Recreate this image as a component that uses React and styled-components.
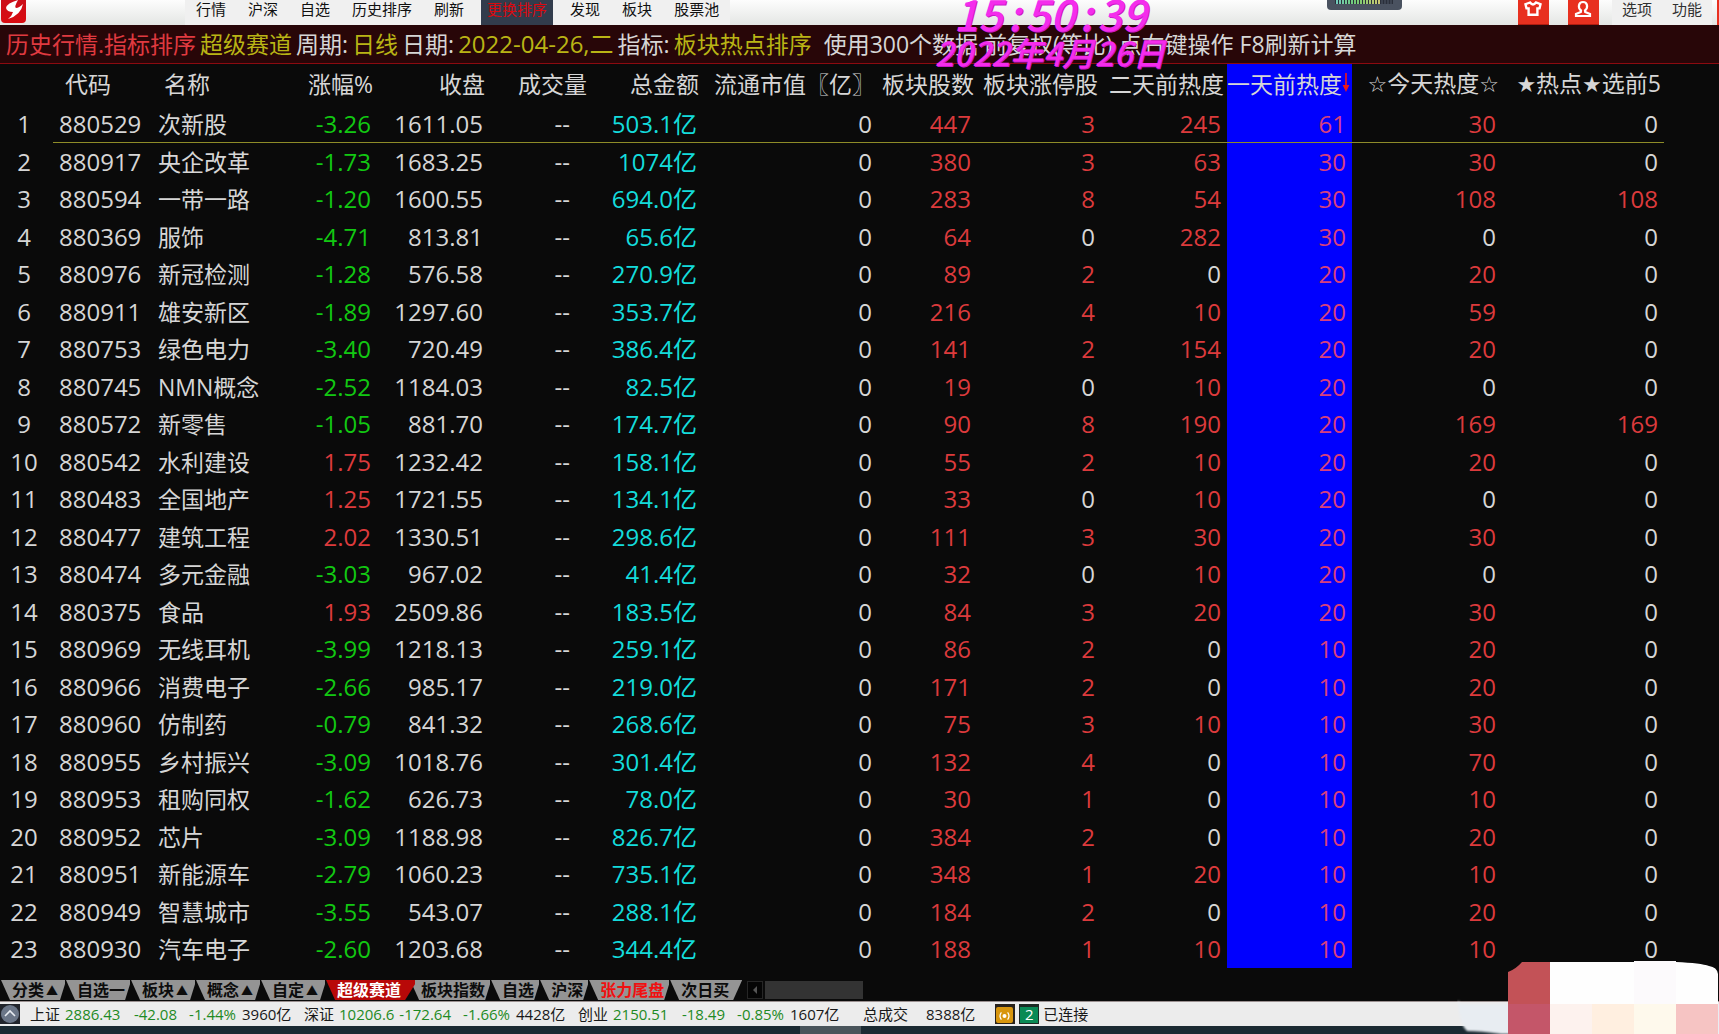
import React from 'react';

import styled, { createGlobalStyle } from 'styled-components';

const menuLeft = ['行情', '沪深', '自选', '历史排序', '刷新', '更换排序', '发现', '板块', '股票池'];

const columns = [
    { key: 'index', label: '', width: 53 },
    { key: 'code', label: '代码', width: 99 },
    { key: 'name', label: '名称', width: 100 },
    { key: 'change', label: '涨幅%', width: 124 },
    { key: 'close', label: '收盘', width: 112 },
    { key: 'volume', label: '成交量', width: 102 },
    { key: 'amount', label: '总金额', width: 112 },
    { key: 'cap', label: '流通市值〖亿〗', width: 176 },
    { key: 'stocks', label: '板块股数', width: 99 },
    { key: 'limitUp', label: '板块涨停股', width: 124 },
    { key: 'twoDays', label: '二天前热度', width: 126 },
    { key: 'oneDay', label: '一天前热度', width: 125 },
    { key: 'today', label: '☆今天热度☆', width: 150 },
    { key: 'hot', label: '★热点★选前5', width: 162 },
];

// code, name, change, close, amount, stocks, limitUp, twoDays, oneDay, today, hot
const boards = [
    ['880529', '次新股', '-3.26', '1611.05', '503.1亿', 447, 3, 245, 61, 30, 0],
    ['880917', '央企改革', '-1.73', '1683.25', '1074亿', 380, 3, 63, 30, 30, 0],
    ['880594', '一带一路', '-1.20', '1600.55', '694.0亿', 283, 8, 54, 30, 108, 108],
    ['880369', '服饰', '-4.71', '813.81', '65.6亿', 64, 0, 282, 30, 0, 0],
    ['880976', '新冠检测', '-1.28', '576.58', '270.9亿', 89, 2, 0, 20, 20, 0],
    ['880911', '雄安新区', '-1.89', '1297.60', '353.7亿', 216, 4, 10, 20, 59, 0],
    ['880753', '绿色电力', '-3.40', '720.49', '386.4亿', 141, 2, 154, 20, 20, 0],
    ['880745', 'NMN概念', '-2.52', '1184.03', '82.5亿', 19, 0, 10, 20, 0, 0],
    ['880572', '新零售', '-1.05', '881.70', '174.7亿', 90, 8, 190, 20, 169, 169],
    ['880542', '水利建设', '1.75', '1232.42', '158.1亿', 55, 2, 10, 20, 20, 0],
    ['880483', '全国地产', '1.25', '1721.55', '134.1亿', 33, 0, 10, 20, 0, 0],
    ['880477', '建筑工程', '2.02', '1330.51', '298.6亿', 111, 3, 30, 20, 30, 0],
    ['880474', '多元金融', '-3.03', '967.02', '41.4亿', 32, 0, 10, 20, 0, 0],
    ['880375', '食品', '1.93', '2509.86', '183.5亿', 84, 3, 20, 20, 30, 0],
    ['880969', '无线耳机', '-3.99', '1218.13', '259.1亿', 86, 2, 0, 10, 20, 0],
    ['880966', '消费电子', '-2.66', '985.17', '219.0亿', 171, 2, 0, 10, 20, 0],
    ['880960', '仿制药', '-0.79', '841.32', '268.6亿', 75, 3, 10, 10, 30, 0],
    ['880955', '乡村振兴', '-3.09', '1018.76', '301.4亿', 132, 4, 0, 10, 70, 0],
    ['880953', '租购同权', '-1.62', '626.73', '78.0亿', 30, 1, 0, 10, 10, 0],
    ['880952', '芯片', '-3.09', '1188.98', '826.7亿', 384, 2, 0, 10, 20, 0],
    ['880951', '新能源车', '-2.79', '1060.23', '735.1亿', 348, 1, 20, 10, 10, 0],
    ['880949', '智慧城市', '-3.55', '543.07', '288.1亿', 184, 2, 0, 10, 20, 0],
    ['880930', '汽车电子', '-2.60', '1203.68', '344.4亿', 188, 1, 10, 10, 10, 0],
];

const tabs = [
    { label: '分类', menu: true },
    { label: '自选一' },
    { label: '板块', menu: true },
    { label: '概念', menu: true },
    { label: '自定', menu: true },
    { label: '超级赛道', active: true },
    { label: '板块指数' },
    { label: '自选' },
    { label: '沪深' },
    { label: '张力尾盘', hot: true },
    { label: '次日买' },
];

const indices = [
    { name: '上证', price: '2886.43', diff: '-42.08', pct: '-1.44%', amount: '3960亿' },
    { name: '深证', price: '10206.6', diff: '-172.64', pct: '-1.66%', amount: '4428亿' },
    { name: '创业', price: '2150.51', diff: '-18.49', pct: '-0.85%', amount: '1607亿' },
];

const colors = {
    text: '#d6d6d6',
    red: '#dc3a3c',
    green: '#12c812',
    cyan: '#14dcdc',
    yellow: '#b9b415',
};

export default function App() {

    return (
        <Page>
            <GlobalStyle />
            <TopBar />
            <InfoBar />
            <Quotes />
            <BottomTabs />
            <Status />
            <Taskbar><TaskbarItem /></Taskbar>
            <Mosaic />
        </Page>
    )
}

function TopBar() {

    return (
        <TopBarContainer>
            <LogoContainer>
                <Logo />
            </LogoContainer>
            <MenuContainer>
                {menuLeft.map(item => (
                    <MenuButton key={item} $active={item === '更换排序'}>{item}</MenuButton>
                ))}
            </MenuContainer>
            <Meter />
            <ActionsContainer>
                <IconButton aria-label='skin'>
                    <svg width='18' height='16' viewBox='0 0 18 16' fill='none' stroke='#fff' strokeWidth='2.4'>
                        <path d='M6 1.5 L1.5 3.2 L2.5 7.4 H4.6 V13.8 H13.4 V7.4 H15.5 L16.5 3.2 L12 1.5 Q9 5.4 6 1.5 Z' />
                    </svg>
                </IconButton>
                <IconButton aria-label='account'>
                    <svg width='18' height='18' viewBox='0 0 18 18' fill='none' stroke='#fff' strokeWidth='2.2'>
                        <path d='M7 10.5 C3.6 8 4.4 2 9 2 C13.6 2 14.4 8 11 10.5 L11.2 12 L16 14 V16 H2 V14 L6.8 12 Z' />
                    </svg>
                </IconButton>
                <OptionButton>选项</OptionButton>
                <OptionButton>功能</OptionButton>
                <RedEdge />
            </ActionsContainer>
            <Clock>
                <ClockTime>15<i>:</i>50<i>:</i>39</ClockTime>
                <ClockDate>2022年4月26日</ClockDate>
            </Clock>
        </TopBarContainer>
    )
}

function Logo() {

    return (
        <svg width='27' height='24' viewBox='0 0 27 24'>
            <defs>
                <linearGradient id='logo' x1='0' y1='0' x2='0' y2='1'>
                    <stop offset='0' stopColor='#c8101c' />
                    <stop offset='1' stopColor='#d90a10' />
                </linearGradient>
            </defs>
            <rect x='1' y='-6' width='25' height='29' rx='4' fill='url(#logo)' />
            <path d='M18 0 Q7 3 6 8 Q7 12 13 12 Q12 16 8 19 Q21 15 23 4 Q19 8 16 8 Q14 7 18 0 Z' fill='#fff' />
        </svg>
    )
}

function Meter() {

    const bars = Array.from({ length: 19 }, (_, i) => i);

    return (
        <MeterContainer>
            <svg width='75' height='10' viewBox='0 0 75 10'>
                <path d='M0 0 H75 V6 Q75 10 71 10 H4 Q0 10 0 6 Z' fill='#4a5260' />
                <rect x='8' y='0' width='58' height='4' fill='#2a2f3a' />
                {bars.map(i => (
                    <rect key={i} x={9 + i * 3} y='0' width='2' height='4' fill={i > 14 ? '#3c4350' : `hsl(${170 - i * 8}, 45%, 62%)`} />
                ))}
            </svg>
        </MeterContainer>
    )
}

function InfoBar() {

    return (
        <InfoContainer>
            <Info $color='#e03a40'>历史行情.指标排序</Info>
            <Info $color={colors.yellow}>超级赛道</Info>
            <Info>周期:</Info>
            <Info $color={colors.yellow}>日线</Info>
            <Info>日期:</Info>
            <DateInfo $color={colors.yellow}>2022-04-26,二</DateInfo>
            <Info>指标:</Info>
            <Info $color={colors.yellow}>板块热点排序</Info>
            <Hint>使用300个数据 前复权(等比) 点右键操作 F8刷新计算</Hint>
        </InfoContainer>
    )
}

function HeaderLabel({ label }) {

    return label.split(/([☆★])/).map((part, i) => (
        /[☆★]/.test(part) ? <Star key={i}>{part}</Star> : part
    ))
}

function heat(value) {
    return value === 0 ? colors.text : colors.red;
}

function Quotes() {

    return (
        <QuotesContainer>
            <Table>
                <colgroup>
                    {columns.map(column => <Col key={column.key} $width={column.width} />)}
                </colgroup>
                <thead>
                    <tr>
                        {columns.map(column => (
                            <HeadCell
                                key={column.key}
                                $left={column.key === 'code' || column.key === 'name'}
                                $sorted={column.key === 'oneDay'}
                            >
                                <HeaderLabel label={column.label} />
                                {column.key === 'oneDay' && <SortArrow />}
                            </HeadCell>
                        ))}
                    </tr>
                </thead>
                <tbody>
                    {boards.map(([code, name, change, close, amount, stocks, limitUp, twoDays, oneDay, today, hot], i) => (
                        <Row key={code} $selected={i === 0}>
                            <IndexCell>{i + 1}</IndexCell>
                            <LeftCell>{code}</LeftCell>
                            <NameCell>{name}</NameCell>
                            <PriceCell $color={change.startsWith('-') ? colors.green : colors.red}>{change}</PriceCell>
                            <PriceCell>{close}</PriceCell>
                            <VolumeCell>--</VolumeCell>
                            <PriceCell $color={colors.cyan}>{amount}</PriceCell>
                            <Cell>0</Cell>
                            <Cell $color={heat(stocks)}>{stocks}</Cell>
                            <Cell $color={heat(limitUp)}>{limitUp}</Cell>
                            <Cell $color={heat(twoDays)}>{twoDays}</Cell>
                            <SortedCell>{oneDay}</SortedCell>
                            <Cell $color={heat(today)}>{today}</Cell>
                            <Cell $color={heat(hot)}>{hot}</Cell>
                        </Row>
                    ))}
                </tbody>
            </Table>
        </QuotesContainer>
    )
}

function SortArrow() {

    return (
        <svg width='8' height='20' viewBox='0 0 8 20'>
            <path d='M3.2 0 H4.8 V12 H7.4 L4 19 L0.6 12 H3.2 Z' fill='#f01818' />
        </svg>
    )
}

function BottomTabs() {

    return (
        <TabsContainer>
            {tabs.map((tab, i) => (
                <Tab key={i} $active={tab.active} $hot={tab.hot}>
                    {tab.label}
                    {tab.menu && <MenuMark>▲</MenuMark>}
                </Tab>
            ))}
            <ScrollButton aria-label='scroll left'>
                <svg width='6' height='8' viewBox='0 0 6 8'><path d='M5 0 V8 L1 4 Z' fill='#555' /></svg>
            </ScrollButton>
            <ScrollTrack />
        </TabsContainer>
    )
}

function Status() {

    return (
        <StatusContainer>
            <ExpandButton aria-label='expand'>
                <svg width='20' height='20' viewBox='0 0 20 20'>
                    <circle cx='10' cy='10' r='9' fill='#6b7688' />
                    <path d='M5 12 L10 7 L15 12' fill='none' stroke='#e8ecf2' strokeWidth='1.6' />
                </svg>
            </ExpandButton>
            {indices.map(item => (
                <IndexGroup key={item.name}>
                    <span>{item.name}</span>
                    <Falling>{item.price}</Falling>
                    <Falling $right>{item.diff}</Falling>
                    <Falling $right>{item.pct}</Falling>
                    <Turnover>{item.amount}</Turnover>
                </IndexGroup>
            ))}
            <Total>
                <span>总成交</span>
                <span>8388亿</span>
            </Total>
            <Connection>
                <svg width='20' height='20' viewBox='0 0 20 20'>
                    <rect width='20' height='20' fill='#28221c' />
                    <rect x='1' y='3' width='17' height='16' rx='2' fill='#d8960e' />
                    <circle cx='9.5' cy='12' r='2' fill='#fff' />
                    <path d='M6.4 8.4 Q3.6 12 6.4 15.6 M12.6 8.4 Q15.4 12 12.6 15.6' fill='none' stroke='#fff' strokeWidth='1.2' />
                </svg>
                <Badge>2</Badge>
                <span>已连接</span>
            </Connection>
        </StatusContainer>
    )
}

function Mosaic() {

    return (
        <MosaicContainer>
            <svg width='262' height='76' viewBox='0 0 262 76'>
                <defs>
                    <filter id='soft' x='-10%' y='-20%' width='120%' height='140%'>
                        <feGaussianBlur stdDeviation='1.2' />
                    </filter>
                </defs>
                <path d='M3 46 H54 V76 H44 Q24 73 10 73 Q2 66 1 42 Z' fill='#e8edf2' filter='url(#soft)' />
                <path d='M51 14 Q59 11 65 4 H93 V46 H51 Z' fill='#c35257' />
                <path d='M93 4 H177 L219 4 Q244 5 252 8 Q260 9 261 16 V46 H93 Z' fill='#fefefe' />
                <rect x='177' y='3' width='42' height='43' fill='#fcfafc' />
                <rect x='51' y='46' width='42' height='30' fill='#c45669' />
                <rect x='93' y='46' width='42' height='30' fill='#fdf2ee' />
                <rect x='135' y='46' width='42' height='30' fill='#ffefe0' />
                <rect x='177' y='46' width='42' height='30' fill='#fef9ec' />
                <rect x='219' y='46' width='42' height='30' fill='#f6c4c3' />
                <rect x='261' y='46' width='1' height='30' fill='#e8edf2' />
            </svg>
        </MosaicContainer>
    )
}

const GlobalStyle = createGlobalStyle`

    * {
        box-sizing: border-box;
    }

    body {
        margin: 0;
        background-color: #0a0a0a;
        font-family: 'Open Sans', 'Noto Sans CJK SC', sans-serif;
    }

    button {
        border: none;
        padding: 0;
        background-color: transparent;
        font-family: inherit;
        cursor: pointer;
        white-space: nowrap;
    }
`;

const Page = styled.div`

    position: relative;
    min-height: 100vh;
    display: flex;
    flex-direction: column;
    overflow: hidden;
`;

const TopBarContainer = styled.header`

    position: relative;
    height: 25px;
    display: flex;
    background: linear-gradient(#fdfdfd, #e4e6e4);
`;

const LogoContainer = styled.div`

    width: 185px;
    height: 25px;
    flex-shrink: 0;
`;

const MenuContainer = styled.nav`

    display: flex;
    background-color: #f0f0f0;
`;

const MenuButton = styled.button`

    height: 25px;
    padding: ${({ $active }) => $active ? '0 6px' : '0 11px'};
    margin: ${({ $active }) => $active ? '0 6px' : '0'};
    padding-bottom: 6px;
    font-size: 15px;
    line-height: 19px;
    color: ${({ $active }) => $active ? '#d80a10' : '#101010'};
    background-color: ${({ $active }) => $active ? '#323c4c' : 'transparent'};
`;

const MeterContainer = styled.div`

    height: 10px;
    margin-left: auto;
    line-height: 0;
`;

const ActionsContainer = styled.div`

    display: flex;
    margin-left: 116px;
`;

const IconButton = styled.button`

    width: 31px;
    height: 25px;
    margin-right: 19px;
    padding-bottom: 6px;
    display: flex;
    justify-content: center;
    align-items: center;
    background-color: #e8301f;
    border-bottom: 1px solid #b01c10;

    & + & {
        margin-right: 13px;
    }
`;

const OptionButton = styled.button`

    height: 25px;
    padding: 0 10px 6px;
    font-size: 15px;
    line-height: 19px;
    color: #303030;
    background-color: #f0f0f0;
`;

const RedEdge = styled.div`

    width: 2px;
    margin-left: 5px;
    background-color: #e8301f;
`;

const Clock = styled.div`

    position: absolute;
    top: -9px;
    right: 37%;
    width: 234px;
    z-index: 2;
    display: flex;
    flex-direction: column;
    align-items: center;
    margin-right: -84px;
    font-family: 'Noto Sans CJK SC', sans-serif;
    font-style: italic;
    font-weight: 500;
    color: #f42cec;
    text-shadow: 1px 1px 0 #c818c8;
    white-space: nowrap;
    pointer-events: none;
`;

const ClockTime = styled.time`

    font-size: 43px;
    line-height: 43px;

    i {
        padding: 0 5px;
    }
`;

const ClockDate = styled.time`

    font-size: 33px;
    line-height: 36px;
`;

const InfoContainer = styled.div`

    height: 39px;
    padding: 0 6px;
    display: flex;
    align-items: center;
    gap: 4px;
    background-color: #280608;
    border-bottom: 1px solid #8c0a10;
    font-size: 23px;
    line-height: 36px;
    white-space: nowrap;
`;

const Info = styled.span`

    color: ${({ $color }) => $color || colors.text};
`;

const DateInfo = styled(Info)`

    font-size: 24px;
`;

const Hint = styled(Info)`

    margin-left: 8px;
`;

const QuotesContainer = styled.main`

    flex: 1;
    padding-right: 55px;
`;

const Table = styled.table`

    width: 100%;
    table-layout: fixed;
    border-collapse: separate;
    border-spacing: 0;
    font-size: 24px;
    line-height: 36px;
    color: ${colors.text};
    white-space: nowrap;
`;

const Col = styled.col`

    width: ${({ $width }) => $width}px;
`;

const HeadCell = styled.th`

    height: 41px;
    padding: ${({ $left, $sorted }) => $left ? '0 0 2px 12px' : $sorted ? '0 2px 2px 0' : '0 3px 2px 0'};
    text-align: ${({ $left }) => $left ? 'left' : 'right'};
    font-size: 23px;
    font-weight: 400;
    background-color: ${({ $sorted }) => $sorted ? '#0000fe' : 'transparent'};
`;

const Star = styled.span`

    font-family: 'DejaVu Sans', sans-serif;
    font-size: 22px;
`;

const Cell = styled.td`

    padding: 0 6px 0 0;
    text-align: right;
    color: ${({ $color }) => $color || colors.text};
`;

const PriceCell = styled(Cell)`

    padding-right: 5px;
`;

const IndexCell = styled(Cell)`

    padding: 0 5px 0 0;
    text-align: center;
`;

const LeftCell = styled(Cell)`

    padding: 0 0 0 6px;
    text-align: left;
`;

const NameCell = styled(LeftCell)`

    font-size: 23px;
`;

const VolumeCell = styled(Cell)`

    padding-right: 20px;
`;

const SortedCell = styled(Cell)`

    color: #d8407c;
    background-color: #0000fe;
`;

const Row = styled.tr`

    height: 37px;

    &:nth-child(odd) {
        height: 38px;
    }

    td:not(:first-child) {
        border-bottom: ${({ $selected }) => $selected ? '1px solid #8e8c28' : 'none'};
    }
`;

const TabsContainer = styled.nav`

    height: 21px;
    display: flex;
    background-color: #0a0a0a;
`;

const Tab = styled.button`

    position: relative;
    height: 20px;
    z-index: ${({ $active }) => $active ? 1 : 0};
    padding: ${({ $active }) => $active ? '0 14px 0 12px' : '0 5px 0 12px'};
    margin-right: ${({ $active }) => $active ? '-6px' : '0'};
    font-size: 16px;
    line-height: 20px;
    font-weight: 700;
    color: ${({ $active, $hot }) => $active ? '#ffffff' : $hot ? '#f01010' : '#0c0c0c'};
    background-color: ${({ $active }) => $active ? '#b80808' : '#949494'};
    clip-path: polygon(1px 0, 100% 0, 100% 4px, calc(100% - ${({ $active }) => $active ? 10 : 5}px) 100%, 10px 100%);

    &:nth-child(11) {
        padding-right: 13px;
        clip-path: polygon(1px 0, 100% 0, calc(100% - 9px) 100%, 10px 100%);
    }
`;

const MenuMark = styled.span`

    display: inline-block;
    width: 16px;
    font-family: 'Noto Sans CJK SC', sans-serif;
    font-size: 12px;
    text-align: center;
`;

const ScrollButton = styled.button`

    width: 16px;
    height: 18px;
    margin: 1px 2px 0 5px;
    background-color: #050505;
    border: 1px solid #262626;
    line-height: 0;
`;

const ScrollTrack = styled.div`

    width: 98px;
    height: 18px;
    margin-top: 1px;
    background-color: #333333;
`;

const StatusContainer = styled.footer`

    height: 25px;
    padding-bottom: 1px;
    display: flex;
    align-items: center;
    background-color: #ececec;
    border-top: 1px solid #9a9090;
    font-size: 15px;
    line-height: 20px;
    color: #181818;
    white-space: nowrap;
`;

const ExpandButton = styled.button`

    width: 20px;
    height: 20px;
    margin-right: 10px;
    background-color: #22252c;
    line-height: 0;
`;

const IndexGroup = styled.div`

    display: grid;
    grid-template-columns: 35px 60px 52px 59px 68px;
`;

const Falling = styled.span`

    color: #1e8a24;
    text-align: ${({ $right }) => $right ? 'right' : 'left'};
`;

const Turnover = styled.span`

    padding-left: 6px;
`;

const Total = styled.div`

    display: flex;
    gap: 18px;
    margin-left: 11px;
`;

const Connection = styled.div`

    display: flex;
    align-items: center;
    gap: 4px;
    margin-left: 20px;
`;

const Badge = styled.span`

    width: 20px;
    height: 20px;
    background-color: #0a8a55;
    border: 1px solid #1c2a24;
    border-top-width: 3px;
    font-size: 15px;
    line-height: 15px;
    text-align: center;
    color: #ffffff;
`;

const Taskbar = styled.div`

    height: 8px;
    padding-left: 46%;
    background-color: #1b2a32;
`;

const TaskbarItem = styled.div`

    width: 61px;
    height: 8px;
    margin-left: 9px;
    background-color: #4a555b;
`;

const MosaicContainer = styled.div`

    position: absolute;
    right: 0;
    bottom: 0;
    z-index: 3;
    line-height: 0;
`;
